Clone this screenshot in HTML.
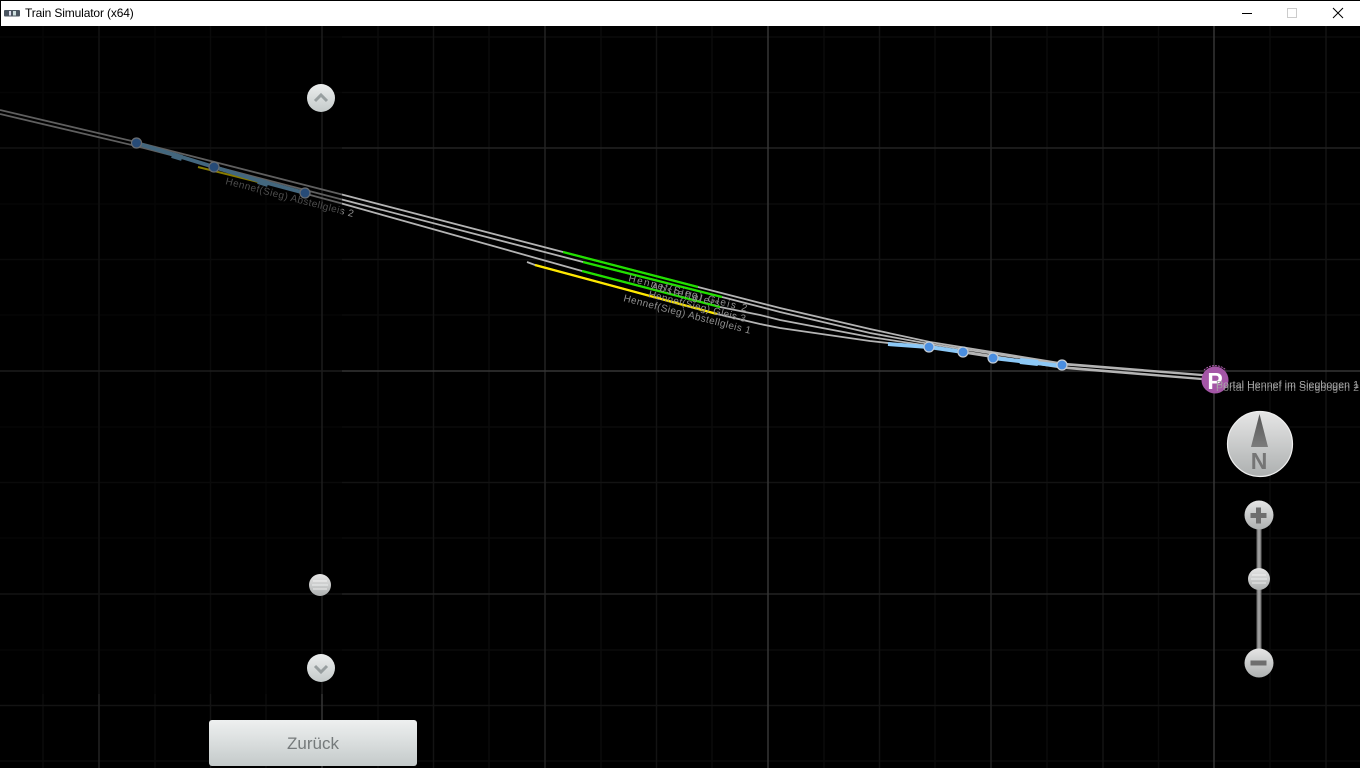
<!DOCTYPE html>
<html>
<head>
<meta charset="utf-8">
<title>Train Simulator (x64)</title>
<style>
html,body{margin:0;padding:0;background:#000;width:1360px;height:768px;overflow:hidden}
#bar{position:absolute;left:1px;top:1px;width:1359px;height:25px;background:#fff}
#ttl{position:absolute;left:25px;top:6px;font:12px/15px "Liberation Sans",sans-serif;letter-spacing:-.14px;color:#000;white-space:nowrap}
#back{position:absolute;left:209px;top:720px;width:208px;height:46px;border-radius:3px;background:linear-gradient(#eef0f0,#c4caca);color:#757a7b;font:17px/47px "Liberation Sans",sans-serif;text-align:center}
svg{position:absolute;left:0;top:0}
text{font-family:"Liberation Sans",sans-serif}
</style>
</head>
<body>
<svg width="1360" height="768" viewBox="0 0 1360 768">
<defs>
<linearGradient id="b" x1="0" y1="0" x2="0" y2="1"><stop offset="0" stop-color="#e6e6e6"/><stop offset="1" stop-color="#adb0b0"/></linearGradient>
<linearGradient id="u" x1="0" y1="0" x2="0" y2="1"><stop offset="0" stop-color="#eceeee"/><stop offset="1" stop-color="#c4caca"/></linearGradient>
<linearGradient id="r" x1="0" y1="0" x2="1" y2="0"><stop offset="0" stop-color="#666"/><stop offset=".5" stop-color="#aaa"/><stop offset="1" stop-color="#666"/></linearGradient>
<linearGradient id="a" x1="0" y1="0" x2="0" y2="1"><stop offset="0" stop-color="#555"/><stop offset="1" stop-color="#7c7c7c"/></linearGradient>
</defs>
<!-- grid -->
<g fill="none" stroke-width="1.5">
<path stroke="#0b0b0b" d="M43 26V768M155 26V768M266 26V768M378 26V768M489 26V768M601 26V768M712 26V768M824 26V768M935 26V768M1047 26V768M1158.500 26V768M1270 26V768M0 92.500H1360M0 204H1360M0 315H1360M0 427H1360M0 538H1360M0 650H1360M0 761H1360M0 37H1360"/>
<path stroke="#131313" d="M210.500 26V768M433.500 26V768M656.500 26V768M879.500 26V768M1103 26V768M1326 26V768M0 259.500H1360M0 482.500H1360M0 705.500H1360"/>
<path stroke="#232323" d="M99 26V768M545 26V768M991 26V768M0 148H1360M0 594H1360"/>
<path stroke="#363636" d="M322 26V768M768 26V768M1214 26V768M0 371H1360"/>
</g>
<!-- tracks -->
<g fill="none" stroke="#b4b4b4" stroke-width="1.800">
<path d="M0 110L136 142L340 194L563 252L698 287L780 308L870 329L930 342L1063 363.500L1205 375"/>
<path d="M0 114L136 146L340 199L583 262L722 297L780 312L870 333L930 344L1063 364.500L1205 375.500"/>
<path d="M258 181L340 203L582 271L720 307L760 315L780 320L870 337L930 346L1063 367L1205 379"/>
<path d="M527 262L535 265L717 314L760 324L780 328L870 341L930 347.500L1063 368L1205 379.500"/>
</g>
<g fill="none" stroke="#22e000" stroke-width="2.300">
<path d="M563 252L698 287"/><path d="M583 262L722 297"/><path d="M582 271L720 307"/>
</g>
<path d="M535 265L717 314" fill="none" stroke="#ffe800" stroke-width="2.300"/>
<path d="M198 167L258 182" fill="none" stroke="#ffe800" stroke-width="2"/>
<!-- occupied -->
<g fill="none" stroke="#8cc8f6" stroke-width="4">
<path d="M888 344L929 347L963 352"/><path d="M993 358L1062 366"/><path d="M1020 361L1038 363" stroke-width="6"/>
<path d="M136 143L175 155L214 167L260 181L305 193" stroke="#7fc2ee" stroke-width="4"/>
<path d="M172 155L182 158M258 181L268 184" stroke="#7fc2ee" stroke-width="6"/>
</g>
<g fill="#4a8ee0" stroke="#c4ccd4" stroke-width="1.200">
<circle cx="929" cy="347" r="5"/><circle cx="963" cy="352" r="5"/><circle cx="993" cy="358" r="5"/><circle cx="1062" cy="365" r="5"/>
<circle cx="136.500" cy="143" r="5"/><circle cx="214" cy="167" r="5"/><circle cx="305" cy="193" r="5"/>
</g>
<!-- labels -->
<g fill="#8f8f8f" font-size="10">
<text transform="translate(225 184) rotate(14.500)" textLength="132" lengthAdjust="spacing">Hennef(Sieg) Abstellgleis 2</text>
<text transform="translate(628 281) rotate(14.500)" textLength="122" lengthAdjust="spacing">Hennef(Sieg) Gleis 2</text>
<text transform="translate(651 289) rotate(14.500)" textLength="70" lengthAdjust="spacing">Abstellgleis</text>
<text transform="translate(648 297) rotate(14.500)" textLength="100" lengthAdjust="spacing">Hennef(Sieg) Gleis 3</text>
<text transform="translate(623 301) rotate(14.500)" textLength="131" lengthAdjust="spacing">Hennef(Sieg) Abstellgleis 1</text>
</g>
<!-- left dim overlay -->
<rect x="0" y="26" width="342" height="668" fill="#000" fill-opacity=".47"/>
<!-- portal -->
<path d="M1204 370A16 16 0 0 1 1226 370" fill="none" stroke="#b060b0" stroke-width="1" stroke-dasharray="2 1"/>
<circle cx="1215" cy="380" r="13.500" fill="#a456a6"/>
<text x="1215" y="389" font-size="23" font-weight="bold" fill="#fff" text-anchor="middle">P</text>
<g fill="#a8a8a8" font-size="10.500">
<text x="1216" y="388" textLength="143" lengthAdjust="spacing">Portal Hennef im Siegbogen 1</text>
<text x="1216" y="391" textLength="143" lengthAdjust="spacing" fill-opacity=".8">Portal Hennef im Siegbogen 2</text>
</g>
<!-- compass -->
<circle cx="1260" cy="444" r="32.500" fill="url(#b)" stroke="#eee" stroke-width="1.200"/>
<path d="M1259.500 414L1251 447H1268Z" fill="url(#a)"/>
<text x="1259" y="469" font-size="23" font-weight="bold" fill="#757575" text-anchor="middle">N</text>
<!-- zoom slider -->
<rect x="1256.500" y="528" width="5" height="124" fill="url(#r)"/>
<circle cx="1259" cy="515" r="14.500" fill="url(#b)"/>
<path d="M1256 507.500h5v5.500h5.500v5h-5.500v5.500h-5v-5.500h-5.500v-5h5.500z" fill="#6e6e6e"/>
<circle cx="1259" cy="579" r="11" fill="url(#b)"/>
<path d="M1252 575h14M1251 579h16M1252 583h14" stroke="#fff" stroke-opacity=".45" stroke-width="1.500"/>
<circle cx="1259" cy="663" r="14.500" fill="url(#b)"/>
<rect x="1250.500" y="660.500" width="16" height="5" fill="#6e6e6e"/>
<!-- left buttons -->
<circle cx="321" cy="98" r="14" fill="url(#u)"/>
<path d="M315 101L321 95L327 101" fill="none" stroke="#989fa0" stroke-width="3"/>
<circle cx="320" cy="585" r="11" fill="url(#b)"/>
<path d="M313 581h14M312 585h16M313 589h14" stroke="#fff" stroke-opacity=".45" stroke-width="1.500"/>
<circle cx="321" cy="668" r="14" fill="url(#u)"/>
<path d="M315 666L321 672L327 666" fill="none" stroke="#989fa0" stroke-width="3"/>
</svg>
<div id="back">Zurück</div>
<div id="bar"></div>
<div id="ttl">Train Simulator (x64)</div>
<svg width="1360" height="26" viewBox="0 0 1360 26">
<rect x="4" y="10" width="16" height="6.500" rx="1" fill="#4a5560"/>
<rect x="9" y="11" width="2" height="4.500" fill="#dde"/><rect x="13" y="11" width="3" height="4.500" fill="#cdd"/>
<path d="M1242 13.500H1252" stroke="#000" stroke-width="1"/>
<rect x="1287.500" y="8.500" width="9" height="9" fill="none" stroke="#ccc" stroke-width="1"/>
<path d="M1333 8L1343 18M1343 8L1333 18" stroke="#000" stroke-width="1" fill="none"/>
</svg>
</body>
</html>
